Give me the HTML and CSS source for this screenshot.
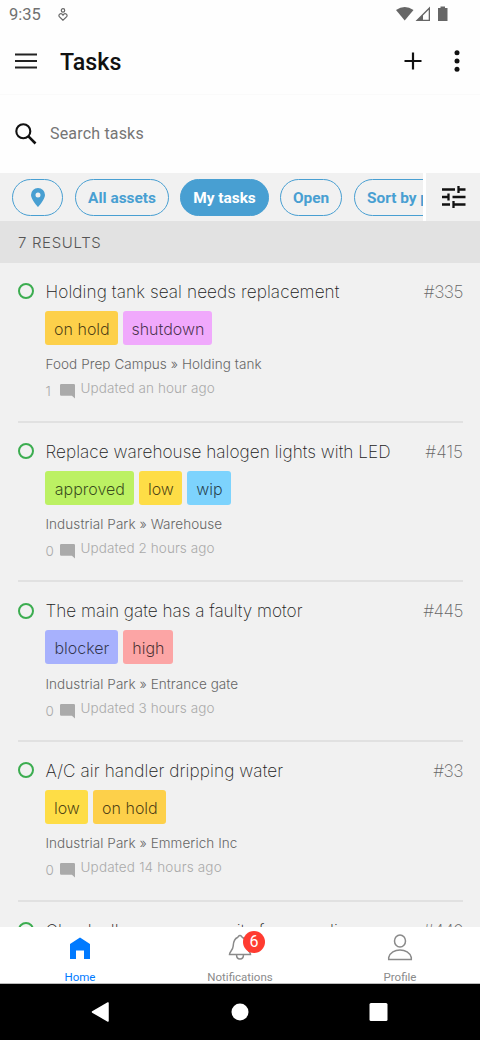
FILE: index.html
```html
<!DOCTYPE html>
<html lang="en">
<head>
<meta charset="utf-8">
<title>Tasks</title>
<link rel="stylesheet" href="styles.css">
</head>
<body>
<svg class="defs" width="0" height="0">
  <symbol id="comment" viewBox="0 0 16 16"><path d="M1.3 0H14.7Q16 0 16 1.3V15.5L12.7 12.5H1.3Q0 12.5 0 11.2V1.3Q0 0 1.3 0Z"/></symbol>
</svg>
<div class="screen">
  <header class="statusbar">
    <span class="clock">9:35</span>
    <svg class="care" width="10" height="14" viewBox="0 0 10 14" fill="none" stroke="#666" stroke-width="1.2"><circle cx="5" cy="2.4" r="1.7"/><path d="M5 12.2L1.3 8.7C-.2 6.7 3 4.1 5 7.1C7 4.1 10.2 6.7 8.7 8.7Z"/></svg>
    <svg class="signals" width="54" height="18" viewBox="0 0 54 18" fill="#666"><path d="M0 4Q8.700 -2 17.500 4L8.700 14.500Z"/><path d="M34 .5V15H19.500ZM32.700 3.700L27 9.400V13.700H32.700Z" fill-rule="evenodd"/><path d="M42 2H44.500V.500H49V2H51.500V15H42Z"/></svg>
  </header>
  <div class="appbar">
    <svg width="22" height="16" viewBox="0 0 22 16" stroke="#222" stroke-width="2"><path d="M0 1.500H22M0 8H22M0 14.500H22"/></svg>
    <h1>Tasks</h1>
    <svg class="add" width="18" height="18" viewBox="0 0 18 18" stroke="#111" stroke-width="2.200"><path d="M.500 9H17.500M9 .500V17.500"/></svg>
    <svg width="6" height="22" viewBox="0 0 6 22" fill="#111"><circle cx="3" cy="2.700" r="2.500"/><circle cx="3" cy="11" r="2.500"/><circle cx="3" cy="19.200" r="2.500"/></svg>
  </div>
  <div class="search">
    <svg width="22" height="22" viewBox="0 0 22 22" fill="none" stroke="#111" stroke-width="2.100"><circle cx="8.300" cy="8.300" r="7"/><path d="M13.200 13.200L20.500 20.500" stroke-width="2.600"/></svg>
    <span>Search tasks</span>
  </div>
  <div class="filters">
    <div class="chips">
      <div class="chip pin"><svg width="14" height="19" viewBox="0 0 14 19" fill="#489fd2"><path fill-rule="evenodd" d="M7 0A7 7 0 0 1 14 7C14 11.500 7 19 7 19S0 11.500 0 7A7 7 0 0 1 7 0ZM7 4.500A2.500 2.500 0 1 0 7 9.500A2.500 2.500 0 1 0 7 4.500Z"/></svg></div>
      <div class="chip all">All assets</div>
      <div class="chip mine">My tasks</div>
      <div class="chip open">Open</div>
      <div class="chip sort">Sort by priority</div>
    </div>
    <div class="tune"><svg width="24" height="24" viewBox="0 0 24 24" fill="none" stroke="#111" stroke-width="2.300"><path d="M0 4.500H13M16.500 1V8M16.500 4.500H23.500M0 12H7M6.500 8.500V15.500M10.500 12H23.500M0 19.500H8M11.500 16V23M11.500 19.500H23.500"/></svg></div>
  </div>
  <div class="results">7 RESULTS</div>
  <main class="tasks">
    <article class="task">
      <i class="ring"></i>
      <div class="body">
        <div class="head"><h2 class="t1">Holding tank seal needs replacement</h2><span class="num tight">#335</span></div>
        <div class="tags"><span class="tag amber" style="width:73px">on hold</span><span class="tag pink" style="width:89px">shutdown</span></div>
        <div class="place">Food Prep Campus » Holding tank</div>
        <div class="meta"><span class="count">1</span><svg class="bubble"><use href="#comment"/></svg><span class="updated">Updated an hour ago</span></div>
      </div>
    </article>
    <article class="task">
      <i class="ring"></i>
      <div class="body">
        <div class="head"><h2 class="t2">Replace warehouse halogen lights with LED</h2><span class="num">#415</span></div>
        <div class="tags"><span class="tag green" style="width:89px">approved</span><span class="tag yellow" style="width:43px">low</span><span class="tag sky" style="width:44px">wip</span></div>
        <div class="place">Industrial Park » Warehouse</div>
        <div class="meta"><span class="count">0</span><svg class="bubble"><use href="#comment"/></svg><span class="updated">Updated 2 hours ago</span></div>
      </div>
    </article>
    <article class="task">
      <i class="ring"></i>
      <div class="body">
        <div class="head"><h2 class="t3">The main gate has a faulty motor</h2><span class="num tight">#445</span></div>
        <div class="tags"><span class="tag violet" style="width:73px">blocker</span><span class="tag red" style="width:50px">high</span></div>
        <div class="place">Industrial Park » Entrance gate</div>
        <div class="meta"><span class="count">0</span><svg class="bubble"><use href="#comment"/></svg><span class="updated">Updated 3 hours ago</span></div>
      </div>
    </article>
    <article class="task">
      <i class="ring"></i>
      <div class="body">
        <div class="head"><h2 class="t4">A/C air handler dripping water</h2><span class="num tight">#33</span></div>
        <div class="tags"><span class="tag yellow" style="width:43px">low</span><span class="tag amber" style="width:73px">on hold</span></div>
        <div class="place">Industrial Park » Emmerich Inc</div>
        <div class="meta"><span class="count">0</span><svg class="bubble"><use href="#comment"/></svg><span class="updated wide">Updated 14 hours ago</span></div>
      </div>
    </article>
    <article class="task">
      <i class="ring"></i>
      <div class="body">
        <div class="head"><h2 class="t5">Check all emergency exits for compliance</h2><span class="num tight">#449</span></div>
      </div>
    </article>
  </main>
  <nav class="tabs">
    <div class="tab active"><svg width="22" height="28" viewBox="0 0 22 28" fill="#007aff"><path d="M11 3.500L21 10V25H15V16.500H7V25H1V10Z"/></svg><span>Home</span></div>
    <div class="tab"><div class="bell"><svg width="24" height="28" viewBox="0 0 24 28" fill="none" stroke="#8a8a8a" stroke-width="1.500"><path d="M12 1.500C10.500 1.500 10.400 2.900 9.500 3.500C5.500 5 5.500 8.500 5.200 12C4.800 17 1.500 17.500 1.500 20.500H22.500C22.500 17.500 19.200 17 18.800 12C18.500 8.500 18.500 5 14.500 3.500C13.600 2.900 13.500 1.500 12 1.500ZM8.500 20.500C8.500 26.500 15.500 26.500 15.500 20.500"/></svg><b class="badge">6</b></div><span>Notifications</span></div>
    <div class="tab"><svg width="26" height="28" viewBox="0 0 26 28" fill="none" stroke="#8a8a8a" stroke-width="1.500"><ellipse cx="13" cy="7" rx="5.500" ry="6"/><path d="M1.700 25.500H24.300V23.500C22 13.500 4 13.500 1.700 23.500Z"/></svg><span>Profile</span></div>
  </nav>
  <footer class="sysnav">
    <svg width="480" height="56" viewBox="0 0 480 56" fill="#fff"><path d="M92.500 28L108 19V37Z" stroke="#fff" stroke-width="1.500" stroke-linejoin="round"/><circle cx="240" cy="28" r="8.500"/><rect x="369.500" y="19" width="18" height="18" rx="1.500"/></svg>
  </footer>
</div>
</body>
</html>
```

FILE: styles.css
```css
* { box-sizing: border-box; }
body { margin: 0; background: #fff; font-family: Roboto, sans-serif; }
h1, h2 { margin: 0; }
svg { display: block; flex: none; }
.defs { display: none; }
.screen { width: 480px; height: 1040px; display: flex; flex-direction: column; overflow: hidden; background: #fefefe; }
.statusbar { height: 30px; display: flex; align-items: flex-start; padding: 5px 30px 0 9px; color: #707070; }
.clock { width: 49px; font-size: 16.5px; line-height: 20px; }
.care { margin-top: 3px; }
.signals { margin: 1px 0 0 auto; }
.appbar { height: 64px; display: flex; align-items: center; padding: 0 20px 2px 15px; }
.appbar h1 { margin-left: 23px; padding-top: 1px; font-size: 23.2px; font-weight: 500; color: #111; letter-spacing: 0.1px; }
.add { margin: 0 32px 0 auto; }
.search { height: 79px; display: flex; align-items: center; gap: 13px; padding: 0 15px 1px; font-size: 16px; color: #757575; border-top: 1px solid #fafafa; letter-spacing: 0.18px; }
.filters { height: 48px; display: flex; background: #f1f1f1; flex: none; }
.chips { width: 423px; display: flex; padding: 6px 0 5px 12px; overflow: hidden; }
.chip { height: 37px; flex: none; display: flex; align-items: center; justify-content: center; border: 1px solid #489fd2; border-radius: 19px; color: #489fd2; font-size: 15.4px; font-weight: 700; white-space: nowrap; }
.pin { width: 51px; margin-right: 12px; }
.all { width: 94px; margin-right: 11px; }
.mine { width: 89px; margin-right: 11px; background: #489fd2; color: #fff; }
.open { width: 62px; margin-right: 12px; }
.sort { width: 130px; justify-content: flex-start; padding-left: 12px; }
.tune { flex: 1; border-left: 3px solid #fff; display: flex; align-items: center; padding-left: 16px; }
.results { height: 42px; flex: none; display: flex; align-items: center; padding-left: 18px; background: #e2e2e2; color: #555; font: 300 15px Inter, sans-serif; letter-spacing: 0.65px; }
.tasks { flex: 1; min-height: 0; overflow: hidden; padding: 0 17px 0 18px; background: #f1f1f1; font-family: Inter, "Liberation Sans", sans-serif; font-weight: 300; }
.task { height: 159.65px; display: flex; padding-top: 17px; border-bottom: 2px solid #e1e1e1; }
.ring { width: 16px; height: 16px; margin: 3.4px 11.5px 0 0; border: 2px solid #3cad50; border-radius: 50%; flex: none; }
.body { flex: 1; min-width: 0; }
.head { display: flex; justify-content: space-between; height: 24px; line-height: 24px; }
.head h2 { font-size: 17.2px; font-weight: 250; color: #222; white-space: nowrap; }
.head .t1 { letter-spacing: 0.08px; }
.head .t2 { letter-spacing: 0.03px; }
.head .t3 { letter-spacing: -0.02px; }
.head .t4 { letter-spacing: 0.08px; }
.head .t5 { letter-spacing: 0.08px; }
.num { font-size: 17.2px; font-weight: 250; color: #666; }
.tight { letter-spacing: -0.5px; }
.tags { display: flex; gap: 5px; padding-top: 7px; margin-left: -0.1px; }
.tag { height: 34px; border-radius: 3px; line-height: 36px; text-align: center; font-size: 16px; color: rgba(0,0,0,.7); white-space: nowrap; }
.amber { background: #fdd04a; }
.pink { background: #f0a9fc; }
.green { background: #bcf163; }
.yellow { background: #fedd46; }
.sky { background: #7dd3fd; }
.violet { background: #a7b1fd; }
.red { background: #fca5a5; }
.place { margin-top: 9.4px; height: 20px; line-height: 20px; font-size: 13.5px; letter-spacing: 0.07px; color: #666; }
.meta { display: flex; margin-top: 2px; height: 24px; color: #aaa; font-size: 13.5px; }
.count { width: 14px; line-height: 30px; }
.bubble { width: 15px; height: 15px; margin-top: 8.1px; fill: #aaa; }
.updated { margin-left: 6px; line-height: 24px; letter-spacing: 0.09px; }
.wide { letter-spacing: 0.17px; }
.tabs { height: 57px; flex: none; display: flex; background: #fff; border-bottom: 1px solid #bbb; }
.tab { flex: 1; display: flex; flex-direction: column; align-items: center; padding-top: 7px; font-size: 11.5px; line-height: 14px; color: #8a8a8a; }
.tab span { margin-top: 7.5px; }
.tab.active { color: #007aff; }
.bell { position: relative; }
.badge { position: absolute; left: 15px; top: -3px; width: 22px; height: 22px; border-radius: 50%; background: #ff3b30; color: #fff; font-size: 16px; font-weight: 400; line-height: 22px; text-align: center; }
.sysnav { height: 56px; flex: none; background: #000; }
```
